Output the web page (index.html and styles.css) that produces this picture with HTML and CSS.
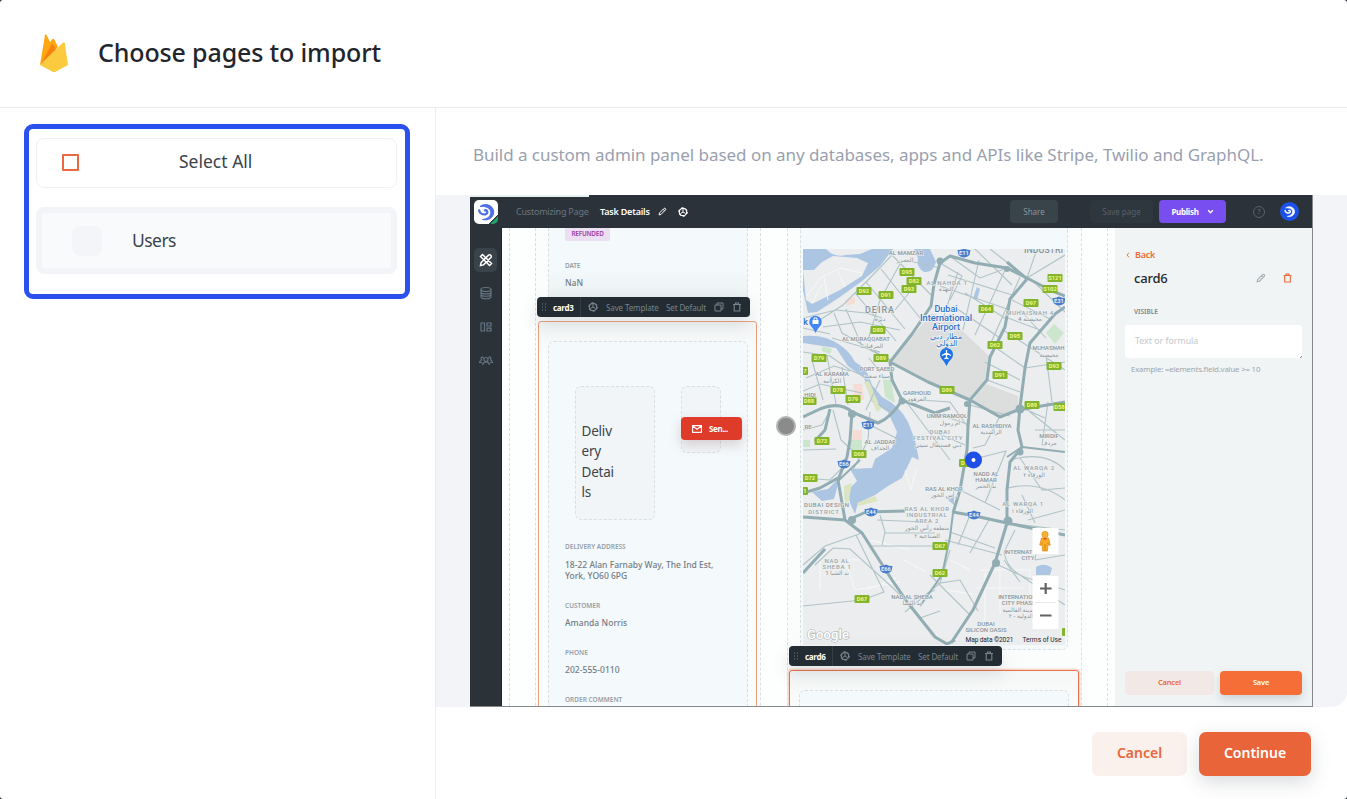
FILE: index.html
```html
<!DOCTYPE html>
<html lang="en">
<head>
<meta charset="utf-8">
<title>Choose pages to import</title>
<link rel="stylesheet" href="styles.css">
</head>
<body>
<svg class="defs" width="0" height="0" aria-hidden="true">
  <defs>
    <symbol id="i-pencil" viewBox="0 0 10 10"><path d="M1.2 8.8l.5-2.200 4.900-4.900q.8-.7 1.600 0t0 1.600L3.400 8.200zM5.700 2.600l1.700 1.700" fill="none" stroke="currentColor" stroke-width="1.100"/></symbol>
    <symbol id="i-gear" viewBox="0 0 10 10"><circle cx="5" cy="5" r="3.700" fill="none" stroke="currentColor" stroke-width="1.200"/><circle cx="5" cy="5" r="4.300" fill="none" stroke="currentColor" stroke-width="1" stroke-dasharray="2.200 2.303"/><path d="M5 5V2M5 5L2.500 6.500M5 5l2.500 1.500" stroke="currentColor" stroke-width="1"/></symbol>
    <symbol id="i-copy" viewBox="0 0 10 10"><path d="M1 3h6v6H1zM3 3V1h6v6H7" fill="none" stroke="currentColor"/></symbol>
    <symbol id="i-trash" viewBox="0 0 10 10"><path d="M1 2.500h8M3.500 2.300V1h3v1.300M2.200 2.500V9h5.600V2.500" fill="none" stroke="currentColor" stroke-width="1.100"/></symbol>
    <symbol id="i-grip" viewBox="0 0 6 8"><path d="M1 1h1M4 1h1M1 4h1M4 4h1M1 7h1M4 7h1" stroke="currentColor" stroke-width="1.100"/></symbol>
    <symbol id="i-swirl" viewBox="0 0 20 20"><path d="M4 4.500C9 .5 17.500 3 17.800 10C17.500 16 12 19 6.500 17.500C11.500 17 14.500 14.500 14.800 10.500C14.500 6 9.500 3.800 4 4.500z" fill="currentColor" stroke="currentColor" stroke-linejoin="round"/><path d="M8.800 8.300C11.800 8 12.300 11.500 9.300 12.300C6.500 12.800 3.500 11.300 3.200 8.300" fill="none" stroke="currentColor" stroke-width="2.300" stroke-linecap="round"/></symbol>
    <rect id="shield" width="15" height="8" rx="1" fill="#83b52c"/>
    <path id="shield-e" d="M0 1.500Q3 1.800 6.500 0 10 1.800 13 1.500L12 6.500Q10 8.500 6.500 9 3 8.500 1 6.500z" fill="#477dca"/>
  </defs>
</svg>

<div class="modal">
  <header class="modal-head">
    <svg class="firebase" viewBox="0 0 28 38"><path d="M0 31L5 1q.7-1.600 1.600 0L10 8l2-2.500q1.300-1.500 2.300 0L18 13 0 31z" fill="#ffa712"/><path d="M0 31L12.500 9.500l3.500 6z" fill="#f5820b"/><path d="M0 31L23 8.500q1.500-.9 1.800.7L28 31l-12 6.500q-2 1-4 0z" fill="#fcca3f"/></svg>
    <h1>Choose pages to import</h1>
  </header>

  <div class="modal-body">
    <aside class="pages">
      <div class="page-picker">
        <div class="select-all"><span class="checkbox"></span><span class="t-select">Select All</span></div>
        <div class="page-item"><span class="page-thumb"></span><span class="t-users">Users</span></div>
      </div>
    </aside>

    <main class="content">
      <p class="intro">Build a custom admin panel based on any databases, apps and APIs like Stripe, Twilio and GraphQL.</p>

      <div class="stage">
        <div class="preview">
          <div class="progress"></div>
          <div class="topbar">
            <div class="logo"><svg><use href="#i-swirl"/></svg></div>
            <span class="crumb">Customizing Page</span>
            <span class="crumb-on">Task Details</span>
            <svg class="ic-pencil"><use href="#i-pencil"/></svg>
            <svg class="ic-gear"><use href="#i-gear"/></svg>
            <span class="btn share">Share</span>
            <span class="btn savepage">Save page</span>
            <span class="btn publish">Publish <svg viewBox="0 0 6 4"><path d="M1 1l2 2 2-2" fill="none" stroke="#fff" stroke-width="1.200"/></svg></span>
            <span class="help">?</span>
            <span class="avatar"><svg><use href="#i-swirl"/></svg></span>
          </div>

          <div class="workspace">
            <nav class="rail">
              <span class="rail-item on"><svg viewBox="0 0 14 14"><path d="M1.500 3.500l2-2 9 9-2 2zM1.500 12.500l.6-3 7.400-7.400q1.200-.8 2.200.2t.2 2.200L4.500 11.900zM5 6.500l1-1M7.800 9.500l1-1" fill="none" stroke="currentColor" stroke-width="1.500"/></svg></span>
              <span class="rail-item"><svg viewBox="0 0 14 14"><path d="M2 3.500v7c0 3 10 3 10 0v-7M2 6c0 2.600 10 2.600 10 0M2 8.300c0 2.600 10 2.600 10 0" fill="none" stroke="currentColor" stroke-width="1.200"/><ellipse cx="7" cy="3.500" rx="5" ry="2" fill="none" stroke="currentColor" stroke-width="1.200"/></svg></span>
              <span class="rail-item"><svg viewBox="0 0 14 14"><path d="M2 3h3.500v8H2zM8 3h4v3H8zM8 8.200h4V11H8z" fill="none" stroke="currentColor" stroke-width="1.200"/></svg></span>
              <span class="rail-item"><svg viewBox="0 0 14 14"><circle cx="7" cy="6.500" r="2" fill="none" stroke="currentColor" stroke-width="1.200"/><path d="M3.500 12q.5-3.200 3.500-3.200t3.500 3.200M4.500 5.500Q4 3.500 2.800 4T2.500 7Q.8 7.500.5 9.500H3M9.500 5.500Q10 3.500 11.200 4t.3 3q1.700.5 2 2.500H11" fill="none" stroke="currentColor" stroke-width="1.200"/></svg></span>
            </nav>

            <div class="canvas">
              <div class="grid">
                <section class="col col-left">
                  <div class="box box-top">
                    <span class="tag">REFUNDED</span>
                    <span class="lbl lbl-date">DATE</span>
                    <span class="val">NaN</span>
                  </div>
                  <div class="toolbar">
                    <svg class="grip"><use href="#i-grip"/></svg><b>card3</b><i></i>
                    <svg><use href="#i-gear"/></svg><span class="t-tpl">Save Template</span><span class="t-def">Set Default</span>
                    <svg><use href="#i-copy"/></svg><svg><use href="#i-trash"/></svg>
                  </div>
                  <div class="selected">
                    <div class="box box-detail">
                      <div class="pair">
                        <div class="title-box">Deliv<br>ery<br>Detai<br>ls</div>
                        <div class="btn-box"><span class="send"><svg viewBox="0 0 10 8"><path d="M.6.6h8.800v6.800H.6zM1 1.200l4 3 4-3" fill="none" stroke="#fff" stroke-width="1.100"/></svg>Sen...</span></div>
                      </div>
                      <dl>
                        <dt>DELIVERY ADDRESS</dt><dd class="tall">18-22 Alan Farnaby Way, The Ind Est,<br>York, YO60 6PG</dd>
                        <dt>CUSTOMER</dt><dd>Amanda Norris</dd>
                        <dt>PHONE</dt><dd>202-555-0110</dd>
                        <dt>ORDER COMMENT</dt>
                      </dl>
                    </div>
                  </div>
                </section>

                <section class="col col-right">
                  <div class="box box-map">
                    <svg class="map" viewBox="803 249 262 396">
                      <rect x="803" y="249" width="262" height="396" fill="#ebedee"/>
                      <path d="M891 361L932 313 950 319 990 357 987 380 970 400 928 381z" fill="#dcdddd"/>
                      <path d="M973 400L986 384 1018 396 1018 411 1000 417z" fill="#dcdddd"/>
                      <path d="M803 249H893L880 266 862 281 840 297 817 312 808 313 803 290z" fill="#abc5e3"/>
                      <path d="M803 270L814 270 822 262 833 256 857 258 868 263 862 276 840 290 812 304 806 300z" fill="#ebedee"/>
                      <path d="M826 249q8 9 20 6l14-1 12-5z" fill="#ebedee"/>
                      <path d="M914 249H930L936 262Q933 273 924 272 916 267 918 258z" fill="#abc5e3"/>
                      <path d="M803 336Q825 334 840 345 850 352 855 362 868 368 872 385L882 397Q900 406 908 422L915 440 919 460 912 457 902 478 888 486 875 495 858 503 855 514 850 503 848 490 857 481 850 469 872 468 875 459 892 448 897 432 888 412 872 402 864 378 848 366 836 348 803 343z" fill="#abc5e3"/>
                      <path d="M812 492L828 489 840 477 834 499 822 501zM948 500l6-4v9zM1036 567q8-5 16 1l-2 7h-14zM973 298l4-11 3 2-3 11z" fill="#abc5e3"/>
                      <path d="M853 384h9l2 16h-9zM853 430h9v10h-10zM845 300l10-3v6l-8 3z" fill="#f5ddd5"/>
                      <path d="M864 382l5-1 12 28-4 3zM857 503l18-7 3 5-19 5zM844 486l8-3-4 22-4-6z" fill="#dce5c1"/>
                      <path d="M883 379l8 1 4 23-10-6zM850 440h12v10h-12zM1046 333l8-9 10 9-9 11zM803 440h7v7h-7zM822 346l10 3-2 5-8-3z" fill="#cce6ce"/>
                      <path class="rw" d="M807 296L820 278 840 268 862 273M812 303L822 284M828 300l-4-23M845 287l-8-17M860 560h-15l10 30 45-8M904 560l22 12M866 590l30-12M980 570h50v40M975 588h50M985 572v50M1000 570v44M820 590v-30M905 470l6 20 5-20M870 540l40 10M950 560l20 10M945 590l28 4"/>
                      <g class="rm">
                        <path d="M803 318L836 310 866 313 882 318M812 325L843 305 868 280 893 254M866 282L905 329M881 269L920 318M893 256L932 296M855 293L896 341M834 313L842 333 890 360M823 327L860 322 900 330M846 309L862 346 880 355M900 264L880 300 868 340M918 282L895 310M832 338L880 352M803 328L830 334M869 358L880 372M905 260L940 268"/>
                        <path d="M803 352L830 356 850 370 864 376M806 378L834 366 850 371M812 360L823 400M827 356L836 404M842 367L848 405M803 391L820 384 862 393M870 412L868 440 853 470M880 380L866 410M830 411L822 425 803 430M833 410L841 440 852 450M803 450L836 449M870 425L900 440M803 478L830 480 845 465M892 412L878 404"/>
                        <path d="M940 263L962 276 950 300M951 257L980 278 1007 268M958 272L943 319M979 260L963 330M1005 270L975 335M1020 277L990 345M940 286L1010 310M948 275L1012 295M953 306L1000 338M965 293L1008 320M975 249L1012 285M990 249L1027 278 1037 249M1027 278L1065 255M1035 283L1065 312M1012 300L1052 320M1008 318L1040 330M1003 330L1028 346M992 345L1025 368M985 362L1020 380M987 380L1020 392M1025 368L1065 362M1028 346L1065 370M1046 355L1052 402M1020 310L1046 338M1048 402L1042 445M1030 412L1065 440M1035 430H1065M1000 416L985 445 973 448M935 413L967 424M920 400L950 402 968 427M970 405L1010 416M1020 407L1045 418M930 430L965 445M905 400L935 440 950 460"/>
                        <path d="M1010 460Q1045 450 1065 470M1008 488Q1040 480 1065 500M1020 458L1042 490 1065 488M1028 520L1065 510M1022 495L1035 523M970 460L1006 451 985 503M960 490L1000 510M970 515L958 545M990 518L970 553M945 540L1002 555M950 532L995 548M1007 523L1065 530M1015 530L1004 552Q1008 575 1035 580L1065 590M1004 560L1020 582M950 550L940 583 960 580 978 611M940 583L905 612M994 563L1020 575 1065 605M970 615L930 575M1040 528L1035 560M1065 555L1035 560"/>
                        <path d="M803 565L825 546 862 533M815 565L833 548 850 549 892 587 908 603M856 535L884 592 862 600 803 606M880 515L885 532 882 545M870 546H935M862 533L870 546M877 520L925 522M885 533H935M908 603L935 590M920 618L940 611"/>
                      </g>
                      <g class="knots"><circle cx="940" cy="261" r="3.500"/><circle cx="967" cy="404" r="3"/><circle cx="996" cy="563" r="4"/><circle cx="1008" cy="521" r="4.500"/><circle cx="1020" cy="409" r="4.500"/><circle cx="852" cy="414" r="4"/><circle cx="902" cy="401" r="3.500"/><circle cx="1007" cy="269" r="3"/><circle cx="1020" cy="452" r="3.500"/><circle cx="852" cy="520" r="4"/></g>
                      <g class="rd">
                        <path d="M803 417L820 409Q840 401 852 412L878 423Q892 417 902 400L892 380 890 362 912 334 931 306 934 284 940 263 950 256 975 263 1007 268 1027 278 1050 290 1065 296M902 400L935 413 950 408M1007 262L1027 279 1010 299 1005 327 990 357 987 380 970 400 968 427 967 450 960 490 953 513M890 362L928 382 970 400 1000 417 1018 410 1065 402"/>
                        <path d="M1065 307L1055 314 1030 343 1025 368 1020 407 1018 430 1022 447 1010 462 1007 490 1007 523 995 563 973 610 951 643M803 517L845 520 862 533 892 580 908 603 935 637 947 644 955 640M845 520L838 480 847 457 850 440 852 412M850 519L866 512 905 511M953 512L975 516 1007 523 1065 535M830 409L825 430 815 441M838 478L820 488 803 493M803 573L825 549"/>
                        <path class="rt" d="M953 513L950 537 942 575 920 606M1007 457L1022 447 1065 452M838 481L860 460"/>
                      </g>
                      <g class="shields">
                        <use href="#shield" x="856.500" y="287"/><use href="#shield" x="878.500" y="291"/><use href="#shield" x="899.500" y="268"/><use href="#shield" x="906.500" y="277"/><use href="#shield" x="901.500" y="285"/><use href="#shield" x="870.500" y="326"/><use href="#shield" x="873.500" y="354"/><use href="#shield" x="811.500" y="354"/><use href="#shield" x="830.500" y="386"/><use href="#shield" x="845.500" y="395"/><use href="#shield" x="801.500" y="397"/><use href="#shield" x="793" y="367"/><use href="#shield" x="814.500" y="437"/><use href="#shield" x="851.500" y="450"/><use href="#shield" x="802.500" y="474"/><use href="#shield" x="793" y="487"/><use href="#shield" x="854.500" y="595"/><use href="#shield" x="978.500" y="305"/><use href="#shield" x="987.500" y="341"/><use href="#shield" x="1007.500" y="332"/><use href="#shield" x="1023.500" y="299"/><use href="#shield" x="1047.500" y="274"/><use href="#shield" x="1042.500" y="285"/><use href="#shield" x="1046.500" y="362"/><use href="#shield" x="992.500" y="371"/><use href="#shield" x="939.500" y="386"/><use href="#shield" x="1024.500" y="401"/><use href="#shield" x="1053.500" y="403"/><use href="#shield" x="932.500" y="542"/><use href="#shield" x="932.500" y="569"/><use href="#shield" x="959" y="459"/><use href="#shield" x="1062" y="628"/>
                        <use href="#shield-e" x="861.500" y="420.500"/><use href="#shield-e" x="837.500" y="459.500"/><use href="#shield-e" x="864.500" y="507.500"/><use href="#shield-e" x="879.500" y="564.500"/><use href="#shield-e" x="957.500" y="248.500"/><use href="#shield-e" x="1052.500" y="296.500"/><use href="#shield-e" x="967.500" y="510.500"/>
                        <text x="864" y="293.300">D92</text><text x="886" y="297.300">D91</text><text x="907" y="274.300">D95</text><text x="914" y="283.300">D82</text><text x="909" y="291.300">D93</text><text x="878" y="332.300">D80</text><text x="881" y="360.300">D89</text><text x="819" y="360.300">D79</text><text x="838" y="392.300">D78</text><text x="853" y="401.300">D79</text><text x="809" y="403.300">D88</text><text x="805" y="373.300">7</text><text x="822" y="443.300">D73</text><text x="859" y="456.300">D68</text><text x="810" y="480.300">D72</text><text x="805" y="493.300">1</text><text x="862" y="601.300">D67</text><text x="986" y="311.300">D64</text><text x="995" y="347.300">D62</text><text x="1015" y="338.300">D95</text><text x="1031" y="305.300">D97</text><text x="1055" y="280.300">S121</text><text x="1050" y="291.300">S102</text><text x="1054" y="368.300">D93</text><text x="1000" y="377.300">D91</text><text x="947" y="392.300">D89</text><text x="1032" y="407.300">D89</text><text x="1059.500" y="409.300">D58</text><text x="940" y="548.300">D67</text><text x="940" y="575.300">D62</text><text x="963" y="465.300">D</text>
                        <g class="es"><text x="868" y="427.300">E11</text><text x="844" y="466.300">E66</text><text x="871" y="514.300">E44</text><text x="886" y="571.300">E66</text><text x="964" y="255.300">E11</text><text x="1059" y="303.300">E31</text><text x="974" y="517.300">E44</text></g>
                      </g>
                      <g class="places">
                        <text x="906" y="255">AL MAMZAR</text><text x="905" y="262">الممزر</text>
                        <text x="880" y="312.500" class="big">DEIRA</text><text x="880" y="321" class="ar">ديرة</text>
                        <text x="866" y="341" textLength="48">AL MURAQQABAT</text><text x="872" y="348">المرقبات</text>
                        <text x="877" y="371">PORT SAEED</text><text x="877" y="378">ميناء سعيد</text>
                        <text x="832" y="376">AL KARAMA</text><text x="832" y="383">الكرامة</text>
                        <text x="917" y="394.500">GARHOUD</text><text x="917" y="401">القرهود</text>
                        <text x="947" y="418">UMM RAMOOL</text><text x="950" y="425">أم رمول</text>
                        <text x="940" y="434" class="sp">DUBAI</text><text x="938" y="440" class="sp">FESTIVAL CITY</text><text x="938" y="447">دبي فستيفال سيتي</text>
                        <text x="992" y="428">AL RASHIDIYA</text><text x="991" y="434">الراشدية</text>
                        <text x="1049" y="438">MIRDIF</text><text x="1049" y="445">مردف</text>
                        <text x="880" y="444">AL JADDAF</text><text x="880" y="450">الجداف</text>
                        <text x="1034" y="470" class="sp">AL WARQA 2</text><text x="1034" y="477">الورقاء ٢</text>
                        <text x="1023" y="506" class="sp">AL WARQA 1</text><text x="1022" y="513">الورقاء ١</text>
                        <text x="986" y="475.500">NADD AL</text><text x="986" y="481.500">HAMAR</text><text x="986" y="488">ند الحمر</text>
                        <text x="944" y="490.500">RAS AL KHOR</text><text x="944" y="497">رأس الخور</text>
                        <text x="927" y="511" class="sp">RAS AL KHOR</text><text x="927" y="517" class="sp">INDUSTRIAL</text><text x="927" y="523" class="sp">AREA 2</text><text x="927" y="530">منطقة رأس الخور</text><text x="927" y="538">الصناعية ٢</text>
                        <text x="826.500" y="507" textLength="45">DUBAI DESIGN</text><text x="824" y="513.500" class="sp">DISTRICT</text>
                        <text x="837" y="562.500" class="sp">NAD AL</text><text x="837" y="569" class="sp">SHEBA 1</text><text x="837" y="575">ند الشبا 1</text>
                        <text x="912" y="598.500">NAD AL SHEBA</text><text x="912" y="605">ند الشبا</text>
                        <text x="1027" y="553.500">INTERNATIONAL</text><text x="1028" y="559.500">CITY</text>
                        <text x="1021" y="599">INTERNATIONAL</text><text x="1021" y="605">CITY PHASE 2</text><text x="1021" y="612">المدينة العالمية</text><text x="1021" y="618">الدولية - ٢</text>
                        <text x="986" y="626">DUBAI</text><text x="986" y="632">SILICON OASIS</text>
                        <text x="947" y="284.500" class="sp">AL NAHDA 1</text><text x="946" y="291">النهدة</text>
                        <text x="1030" y="314.500" class="sp">MUHAISNAH 4</text><text x="1030" y="321">محيصنة 4</text>
                        <text x="1048.500" y="350" textLength="32">MUHAISNAH</text><text x="1049" y="357">محيصنة</text>
                        <text x="1044" y="253" class="big" textLength="40">INDUSTRI</text>
                        <text x="808" y="429">RE</text><text x="810" y="397">HIDI</text>
                      </g>
                      <g class="poi"><text x="946" y="312">Dubai</text><text x="946" y="321" textLength="52" lengthAdjust="spacingAndGlyphs">International</text><text x="946" y="330">Airport</text><text x="946" y="339" class="ar">مطار دبي</text><text x="946" y="346" class="ar">الدولي</text><text x="805.500" y="325">k</text></g>
                      <path d="M946.500 366Q944 361 941 358A6.500 6.500 0 1 1 952 358Q949 361 946.500 366z" fill="#1a73e8"/><path d="M946.500 350v9M942 355.500l4.500-2.500 4.500 2.500M944.500 359l2-1.500 2 1.500" stroke="#fff" stroke-width="1.300" fill="none"/>
                      <path d="M815.500 333Q813 328 810.500 325.500A6.200 6.200 0 1 1 820.500 325.500Q818 328 815.500 333z" fill="#4285f4"/><path d="M812.500 320h6v4h-6z" fill="#fff"/><path d="M814 320v-2h3v2" stroke="#fff" fill="none"/>
                      <circle cx="973.500" cy="460" r="8.500" fill="#1f4fe6"/><circle cx="973.500" cy="460" r="2" fill="#fff"/>
                      <text x="807" y="639" class="google" textLength="42">Google</text>
                      <g class="attr"><text x="965.500" y="641.500" textLength="48">Map data ©2021</text><text x="1022.500" y="641.500" textLength="39">Terms of Use</text></g>
                      <rect x="1032.500" y="528" width="26" height="26" fill="#fff"/>
                      <circle cx="1045" cy="534.500" r="3.200" fill="#f7b132" stroke="#d98a15" stroke-width=".6"/><path d="M1041.500 538h7l1.800 7-1.500.5-.8-3-.5 8.500h-5l-.5-8.500-.8 3-1.500-.5z" fill="#f9ad23" stroke="#d98a15" stroke-width=".7"/><path d="M1043 538l2 2.500 2-2.500z" fill="#e2562c"/><path d="M1045 544v7" stroke="#c77913" stroke-width=".7"/>
                      <rect x="1032.500" y="576" width="26" height="53" fill="#fff"/><path d="M1035 602.500h21" stroke="#e6e6e6"/><path d="M1040 588.500h11.500M1045.700 583v11M1040 615.500h11.500" stroke="#626262" stroke-width="2.200"/>
                    </svg>
                  </div>
                  <div class="toolbar">
                    <svg class="grip"><use href="#i-grip"/></svg><b>card6</b><i></i>
                    <svg><use href="#i-gear"/></svg><span class="t-tpl">Save Template</span><span class="t-def">Set Default</span>
                    <svg><use href="#i-copy"/></svg><svg><use href="#i-trash"/></svg>
                  </div>
                  <div class="selected strong"><div class="box box-empty"></div></div>
                </section>
              </div>
              <span class="pointer"></span>
            </div>

            <aside class="props">
              <div class="back"><svg viewBox="0 0 4 6"><path d="M3 .7L1 3l2 2.300" fill="none" stroke="currentColor" stroke-width=".9"/></svg>Back</div>
              <div class="props-title"><span>card6</span><svg class="p1"><use href="#i-pencil"/></svg><svg class="p2"><use href="#i-trash"/></svg></div>
              <div class="props-label">VISIBLE</div>
              <div class="field">Text or formula</div>
              <div class="hint">Example: =elements.field.value &gt;= 10</div>
              <div class="props-actions"><span class="pcancel">Cancel</span><span class="psave">Save</span></div>
            </aside>
          </div>
        </div>
      </div>

      <footer class="actions">
        <button class="cancel">Cancel</button>
        <button class="continue">Continue</button>
      </footer>
    </main>
  </div>
</div>
</body>
</html>
```
FILE: styles.css
```css
* { box-sizing: border-box; }
body { margin: 0; background: #171b20; font-family: "Noto Sans", "Open Sans", sans-serif; color: #1f262d; overflow: hidden; }
.defs { position: absolute; }
svg { display: block; flex: none; }
.modal { height: 799px; background: #fff; border-radius: 3px; display: flex; flex-direction: column; overflow: hidden; }
.modal-head { height: 108px; flex: none; border-bottom: 1px solid #e9ebf1; display: flex; align-items: center; padding: 0 0 2px 40px; gap: 30px; }
.firebase { width: 28px; height: 38px; }
h1 { margin: 0 0 2px; font-size: 25px; font-weight: 500; line-height: 34px; letter-spacing: -.14px; white-space: nowrap; }
.modal-body { flex: 1; display: flex; min-height: 0; }
.pages { width: 436px; flex: none; border-right: 1px solid #ebedf3; padding: 16px 25px 0 24px; }
.page-picker { width: 386px; height: 175px; border: 5px solid #2a50ee; border-radius: 9px; padding: 9px 8px 0 7px; display: flex; flex-direction: column; gap: 19px; }
.select-all { height: 50px; border: 1px solid #eff0f4; border-radius: 8px; display: flex; align-items: center; padding: 0 0 4px 25px; font-size: 17.500px; color: #3b434c; }
.checkbox { width: 17px; height: 17px; border: 2px solid #e96a40; border-radius: 1px; margin: 3px 100px 0 0; }
.t-select { letter-spacing: 0; }
.page-item { height: 67px; border: 6px solid #f3f4f8; border-radius: 8px; background: #f9fafc; display: flex; align-items: center; padding-left: 30px; gap: 30px; font-size: 17.500px; color: #3b434c; }
.page-thumb { width: 30px; height: 30px; border-radius: 8px; background: #f4f5f9; }
.t-users { letter-spacing: -.55px; padding-bottom: 2px; }
.content { flex: 1; display: flex; flex-direction: column; min-width: 0; }
.intro { margin: 0; height: 87px; padding: 35px 0 0 37px; font-size: 17px; line-height: 24px; color: #9a9fae; letter-spacing: -.045px; white-space: nowrap; }
.stage { height: 512px; flex: none; background: #f3f4f8; border-bottom-right-radius: 15px; padding-left: 34px; }

.preview { position: relative; width: 843px; height: 512px; border: solid #84888b; border-width: 0 1px 1px 0; display: flex; flex-direction: column; overflow: hidden; font-size: 8px; white-space: nowrap; }
.progress { position: absolute; left: 0; top: 0; width: 119px; height: 1.500px; background: #e7f2f0; }
.topbar { height: 33px; flex: none; background: #2b3239; display: flex; align-items: center; padding-left: 4px; color: #fff; }
.logo { width: 24px; height: 24px; margin-right: 18px; border-radius: 5px; background: linear-gradient(135deg, #fff 80%, #2b3239 80%, #2b3239 83%, #23a266 84%); color: #4f6fe8; padding: 2px; }
.logo svg { width: 20px; height: 20px; }
.crumb { width: 84px; font-size: 9px; color: #6c757f; letter-spacing: -.22px; }
.crumb-on { width: 58px; font-weight: 600; font-size: 9px; letter-spacing: -.2px; }
.ic-pencil { width: 9px; height: 9px; margin-right: 11px; }
.ic-gear { width: 10px; height: 10px; margin-right: 322px; }
.btn { height: 23px; border-radius: 4px; display: flex; align-items: center; justify-content: center; font-size: 8px; flex: none; }
.share { width: 48px; background: #38434a; color: #8795a2; margin-right: 32px; }
.savepage { width: 63px; background: #2e373e; color: #56616a; margin-right: 6px; }
.publish { width: 67px; background: #784ef0; font-weight: 700; gap: 8px; margin-right: 27px; letter-spacing: -.3px; }
.publish svg { width: 7px; height: 5px; }
.help { width: 12px; height: 12px; border: 1px solid #58636c; border-radius: 50%; color: #66717a; font-size: 7px; line-height: 10px; text-align: center; margin-right: 15px; flex: none; }
.avatar { width: 19px; height: 19px; border-radius: 50%; background: #1d52ea; padding: 3px; flex: none; }
.avatar svg { width: 13px; height: 13px; }

.workspace { flex: 1; display: flex; min-height: 0; }
.rail { width: 32px; flex: none; background: #2b3338; padding-top: 20px; display: flex; flex-direction: column; align-items: center; gap: 10px; color: #647583; border-right: 1px solid #20272b; }
.rail-item { width: 23px; height: 23.500px; display: flex; align-items: center; justify-content: center; border-radius: 5px; }
.rail-item svg { width: 14px; height: 14px; }
.rail-item.on { background: #3a4349; color: #fff; }
.canvas { position: relative; width: 613px; flex: none; background: #fdfefe; padding-left: 7px; }
.grid { width: 599px; height: 100%; border: dashed #dcdfe1; border-width: 0 1px; display: grid; grid-template-columns: 226px 295px; column-gap: 26px; padding-left: 25px; overflow: hidden; }
.col { position: relative; border: dashed #dcdfe1; border-width: 0 1px; background: #fbfdfd; min-width: 0; }
.box { border: 1px dashed #d9dee0; background: #f4f9fb; }
.box-top { margin: 0 12px; height: 80px; border-width: 0 1px; padding-left: 16px; display: flex; flex-direction: column; align-items: flex-start; background: linear-gradient(#f4f9fb 50%, #e8edee); }
.tag { height: 13px; width: 45px; background: #ecdff1; color: #9b3aa5; font-size: 6.300px; font-weight: 600; line-height: 11px; letter-spacing: -.15px; text-align: center; border-radius: 0 0 2px 2px; }
.lbl, dt { font-size: 6.500px; font-weight: 600; color: #969ea8; line-height: 9px; letter-spacing: -.13px; }
.lbl-date { margin-top: 19.500px; }
.val { font-size: 8.500px; font-weight: 500; color: #737b84; line-height: 12px; margin-top: 7px; }
.toolbar { position: absolute; z-index: 2; width: 213px; height: 20px; border-radius: 4px; background: #232c32; color: #77838e; display: flex; align-items: center; gap: 7px; padding-left: 4px; font-size: 8px; box-shadow: 0 8px 18px rgba(70,80,85,.16); }
.col-left .toolbar { left: 1px; top: 69px; }
.col-right .toolbar { left: 1px; top: 418px; }
.toolbar svg { width: 10px; height: 10px; margin-right: 1px; }
.toolbar .grip { width: 6px; height: 8px; margin: 0 -1px 0 0; }
.toolbar b { color: #fff; width: 20px; letter-spacing: -.3px; }
.toolbar i { width: 1px; height: 20px; background: #343d43; }
.t-tpl { width: 53px; letter-spacing: -.12px; }
.t-def { width: 41px; letter-spacing: -.12px; }
.selected { margin: 13px 3px 0 2px; height: 400px; border: 1px solid #eea07c; border-radius: 3px; padding: 19px 8px 0 9px; background: linear-gradient(#f5f7f7, #fbfdfd 40px); }
.strong { border: 1.500px solid #e5734d; box-shadow: 0 0 0 1.500px #fbd8cb; margin: 20px 2px 0 1px; padding: 19px 9px 0; }
.box-detail { height: 400px; border-radius: 6px; padding: 44px 0 0 16px; }
.pair { display: flex; gap: 26px; height: 134px; padding-left: 10px; }
.title-box { width: 80px; height: 134px; border: 1px dashed #d9dee0; border-radius: 6px; background: #f1f5f8; padding: 34px 0 0 5.500px; font-size: 13.500px; line-height: 20.400px; letter-spacing: -.2px; color: #3c444d; }
.btn-box { position: relative; width: 40px; height: 67px; border: 1px dashed #d9dee0; border-radius: 6px; background: #f1f5f8; }
.send { position: absolute; left: -1px; top: 30px; width: 61px; height: 23px; border-radius: 4px; background: #df3b2a; color: #fff; font-weight: 700; font-size: 8px; letter-spacing: -.4px; display: flex; align-items: center; gap: 7px; padding-left: 11px; box-shadow: 0 5px 12px rgba(150,120,120,.3); }
.send svg { width: 10px; height: 8px; }
dl { margin: 22px 0 0; }
dt { letter-spacing: 0; }
dd { margin: 7.500px 0 19.700px; font-size: 8.500px; font-weight: 500; line-height: 11.200px; letter-spacing: .05px; color: #737b84; }
dd.tall { letter-spacing: 0; }
.col-right .box-map { margin: 0 13px 0 12px; height: 422px; border-width: 0 1px 1px; border-radius: 0 0 6px 6px; padding: 21px 0 0 2px; }
.map { width: 262px; height: 396px; }
.box-empty { height: 60px; border-radius: 6px 6px 0 0; }
.rw { fill: none; stroke: #f8f9f9; stroke-width: .9; }
.rm { fill: none; stroke: #b0c3c7; stroke-width: 1.100; }
.knots { fill: #91adb3; }
.rd { fill: none; stroke: #91adb3; stroke-width: 3; stroke-linejoin: round; }
.rd .rt { stroke-width: 2; }
.shields text { font: 700 5.800px Roboto, sans-serif; fill: #f3f58a; text-anchor: middle; }
.shields .es text { fill: #e3edf9; }
.places text { font: 500 6px Roboto, "Noto Sans", "DejaVu Sans", sans-serif; fill: #89929a; text-anchor: middle; paint-order: stroke; stroke: #f1f3f3; stroke-width: 1px; }
.places .sp { letter-spacing: .7px; fill: #98a3a9; }
.places .big { font-size: 9px; letter-spacing: 1px; }
.poi text { font: 500 9px Roboto, sans-serif; fill: #2f70c9; text-anchor: middle; paint-order: stroke; stroke: #f3f5f6; stroke-width: 1.500px; }
.poi .ar { font-size: 7.500px; }
.google { font: 500 13px Roboto, sans-serif; fill: #fff; stroke: #b6babc; stroke-width: 1.300px; paint-order: stroke; }
.attr text { font: 6.600px Roboto, sans-serif; fill: #252525; }
.pointer { position: absolute; left: 274px; top: 188px; width: 20px; height: 20px; border-radius: 50%; background: #8a8a8a; border: 2px solid #b2b2b2; z-index: 3; }

.props { flex: 1; background: #f0f4f5; padding: 20px 10px 11px; display: flex; flex-direction: column; }
.back { display: flex; align-items: center; gap: 5px; color: #eb6a3a; font-weight: 600; font-size: 9px; line-height: 14px; letter-spacing: -.2px; padding-left: 1px; }
.back svg { width: 4px; height: 6px; }
.props-title { display: flex; align-items: center; padding-left: 9px; margin-top: 6px; height: 20px; font-size: 13px; font-weight: 500; letter-spacing: -.2px; }
.props-title span { width: 122px; }
.p1 { width: 10px; height: 10px; color: #a6adb2; margin-right: 16px; }
.p2 { width: 11px; height: 10px; color: #eb6a3a; }
.props-label { margin: 19px 0 0 9px; font-size: 6.500px; font-weight: 600; line-height: 10px; color: #7c848c; }
.field { margin-top: 8px; height: 33px; width: 177px; background: linear-gradient(135deg, transparent 50%, #555 50%) no-repeat right bottom / 3px 3px, #fff; border-radius: 3px; padding-left: 10px; line-height: 32px; font-size: 8.800px; color: #c2c7cc; }
.hint { margin: 6px 0 0 6px; font-size: 7.800px; line-height: 11px; color: #9ea5ac; letter-spacing: -.17px; }
.props-actions { margin-top: auto; display: flex; gap: 6px; }
.props-actions span { height: 24px; border-radius: 4px; text-align: center; line-height: 23px; font-weight: 600; font-size: 7.500px; letter-spacing: -.2px; }
.pcancel { width: 89px; background: #f2e9e7; color: #eb6a3a; }
.psave { width: 82px; background: #f56e38; color: #fff; box-shadow: 0 4px 10px rgba(100,110,120,.25); }

.actions { display: flex; justify-content: flex-end; gap: 12px; padding: 25px 36px 0 0; }
.actions button { height: 44px; border: 0; border-radius: 7px; font: 600 14px "Noto Sans", sans-serif; padding: 0 0 3px; }
.cancel { width: 95px; background: #faf0ec; color: #e8663b; }
.continue { width: 112px; background: #e96539; color: #fff; box-shadow: 0 6px 20px rgba(60,70,80,.2); }
```
